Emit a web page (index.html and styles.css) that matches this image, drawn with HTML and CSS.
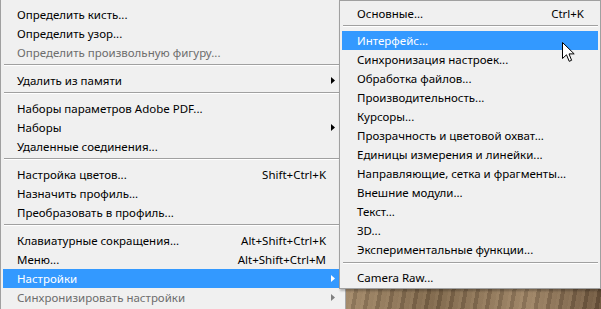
FILE: index.html
```html
<!DOCTYPE html>
<html lang="ru">
<head>
<meta charset="utf-8">
<link rel="stylesheet" href="styles.css">
</head>
<body>
<div class="screen">
  <div class="menu main">
    <div class="item"><span class="label">Определить кисть...</span></div>
    <div class="item"><span class="label">Определить узор...</span></div>
    <div class="item disabled"><span class="label">Определить произвольную фигуру...</span></div>
    <div class="sep"></div>
    <div class="item"><span class="label">Удалить из памяти</span><span class="arrow"><svg width="4" height="7" viewBox="0 0 4 7"><polygon points="0,0 4,3.5 0,7"/></svg></span></div>
    <div class="sep"></div>
    <div class="item"><span class="label">Наборы параметров Adobe PDF...</span></div>
    <div class="item"><span class="label">Наборы</span><span class="arrow"><svg width="4" height="7" viewBox="0 0 4 7"><polygon points="0,0 4,3.5 0,7"/></svg></span></div>
    <div class="item"><span class="label">Удаленные соединения...</span></div>
    <div class="sep"></div>
    <div class="item"><span class="label">Настройка цветов...</span><span class="key">Shift+Ctrl+K</span></div>
    <div class="item"><span class="label">Назначить профиль...</span></div>
    <div class="item"><span class="label">Преобразовать в профиль...</span></div>
    <div class="sep"></div>
    <div class="item"><span class="label">Клавиатурные сокращения...</span><span class="key">Alt+Shift+Ctrl+K</span></div>
    <div class="item"><span class="label">Меню...</span><span class="key">Alt+Shift+Ctrl+M</span></div>
    <div class="item active"><span class="label">Настройки</span><span class="arrow"><svg width="4" height="7" viewBox="0 0 4 7"><polygon points="0,0 4,3.5 0,7"/></svg></span></div>
    <div class="item disabled"><span class="label">Синхронизировать настройки</span><span class="arrow"><svg width="4" height="7" viewBox="0 0 4 7"><polygon points="0,0 4,3.5 0,7"/></svg></span></div>
  </div>

  <div class="menu sub">
    <div class="item"><span class="label">Основные...</span><span class="key">Ctrl+K</span></div>
    <div class="sep"></div>
    <div class="item active"><span class="label">Интерфейс...</span></div>
    <div class="item"><span class="label">Синхронизация настроек...</span></div>
    <div class="item"><span class="label">Обработка файлов...</span></div>
    <div class="item"><span class="label">Производительность...</span></div>
    <div class="item"><span class="label">Курсоры...</span></div>
    <div class="item"><span class="label">Прозрачность и цветовой охват...</span></div>
    <div class="item"><span class="label">Единицы измерения и линейки...</span></div>
    <div class="item"><span class="label">Направляющие, сетка и фрагменты...</span></div>
    <div class="item"><span class="label">Внешние модули...</span></div>
    <div class="item"><span class="label">Текст...</span></div>
    <div class="item"><span class="label">3D...</span></div>
    <div class="item"><span class="label">Экспериментальные функции...</span></div>
    <div class="sep sep-last"></div>
    <div class="item"><span class="label">Camera Raw...</span></div>
  </div>

  <svg class="cursor" width="13" height="21" viewBox="0 0 13 21">
    <path d="M0.5 0.5 L0.5 16.5 L4.5 12.8 L7.2 19.3 L9.6 18.3 L7 11.9 L12.2 11.9 Z" fill="#fff" stroke="#000" stroke-width="1" stroke-linejoin="miter"/>
  </svg>
</div>
</body>
</html>
```

FILE: styles.css
```css
html, body {
  margin: 0;
  padding: 0;
}

body {
  width: 601px;
  height: 309px;
  overflow: hidden;
  font-family: "Noto Sans", "Open Sans", sans-serif;
  font-size: 11.5px;
  color: #000;
}

.screen {
  position: relative;
  width: 601px;
  height: 309px;
  overflow: hidden;
  background:
    repeating-linear-gradient(100deg, rgba(255,235,200,0.10) 0 3px, rgba(0,0,0,0.10) 3px 7px, rgba(255,240,210,0.06) 7px 12px),
    linear-gradient(90deg, #3f2f22 0%, #5d4836 18%, #8a7154 40%, #a58b6b 55%, #7c6448 72%, #9a8062 88%, #6b533b 100%);
}

.menu {
  background: #f0f0f0;
  box-sizing: border-box;
}

.main {
  width: 346px;
  height: 309px;
  border-left: 1px solid #a0a0a0;
  border-right: 1px solid #a7a7a7;
  padding-top: 5px;
}

.sub {
  position: absolute;
  left: 339px;
  top: 0;
  width: 262px;
  border: 1px solid #a0a0a0;
  padding: 3px 0 1px;
  box-shadow: 1px 2px 2px rgba(0,0,0,0.25);
}

.item {
  display: flex;
  align-items: center;
  height: 19px;
  margin: 0 2px;
  white-space: nowrap;
}

.main .item {
  padding-left: 14px;
}

.sub .item {
  padding-left: 15px;
  padding-right: 14px;
}

.label {
  flex: 1;
}

.key {
  text-align: right;
}

.main .key {
  margin-right: 17px;
}

.arrow {
  display: flex;
  align-items: center;
  width: 17px;
  padding-left: 5px;
  box-sizing: border-box;
  margin-left: auto;
}

.arrow svg {
  fill: #000;
}

.item.disabled {
  color: #6d6d6d;
}

.item.disabled .arrow svg {
  fill: #808080;
}

.item.active {
  background: #3399ff;
  color: #fff;
}

.item.active .arrow svg {
  fill: #fff;
}

.sep {
  height: 9px;
  margin: 0 2px 0 3px;
  box-sizing: border-box;
  padding-top: 2px;
}

.sep::before {
  content: "";
  display: block;
  height: 1px;
  background: #a0a0a0;
  border-bottom: 1px solid #ffffff;
}

.sub .sep {
  height: 8px;
  margin: 0 2px 0 3px;
}

.sub .sep-last {
  height: 9px;
  padding-top: 3px;
}

.cursor {
  position: absolute;
  left: 562px;
  top: 42px;
}
```
